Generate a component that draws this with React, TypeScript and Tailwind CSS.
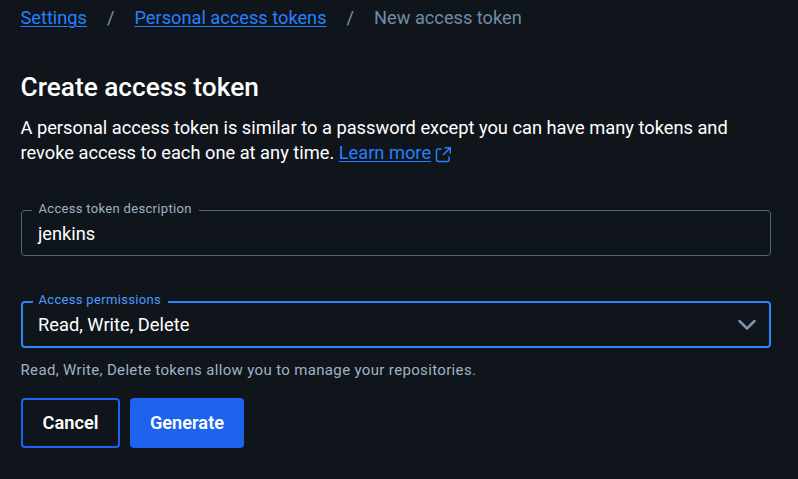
function ExternalLinkIcon() {
  return (
    <svg className="ml-[4px] inline-block h-[17px] w-[17px] align-[-4px]" viewBox="0 0 17 17" fill="none" stroke="#2680ff" strokeWidth="1.5">
      <path d="M6.5 3H3a1.5 1.5 0 0 0-1.5 1.5V14A1.5 1.5 0 0 0 3 15.5h9.5A1.5 1.5 0 0 0 14 14v-3.5" />
      <path d="M9.5 1.75h5.75V7.5M15.25 1.75 8 9" />
    </svg>
  );
}

export default function App() {
  return (
    <main className="flex h-[479px] w-[798px] flex-col bg-[#10151b] pl-[21px] pr-[27px] font-['Roboto',sans-serif] text-white">
      <nav className="-ml-[0.5px] flex h-[36px] items-center gap-[20px] text-[18.22px] leading-[36px]">
        <a className="text-[#2680ff] underline decoration-1 underline-offset-2">Settings</a>
        <span className="text-[#7794ab]">/</span>
        <a className="text-[#2680ff] underline decoration-1 underline-offset-2">Personal access tokens</a>
        <span className="text-[#7794ab]">/</span>
        <span className="text-[#6f8ca5]">New access token</span>
      </nav>
      <h1 className="-ml-[0.5px] mt-[35px] h-[32px] text-[26.25px] font-medium leading-[32px]">Create access token</h1>
      <p className="-ml-[0.5px] mt-[12px] h-[50px] text-[18.26px] leading-[25px]">
        A personal access token is similar to a password except you can have many tokens and
        <br />
        revoke access to each one at any time.{' '}
        <a className="text-[#2680ff] underline decoration-1 underline-offset-2">Learn more</a>
        <ExternalLinkIcon />
      </p>
      <fieldset className="mt-[37px] h-[54px] rounded-[4px] border border-[#4b687e] px-[10px]">
        <legend className="pb-[2px] pl-[6.5px] pr-[7px] text-[13px] leading-[14px] tracking-[0.32px] text-[#9fb2c3]">Access token description</legend>
        <div className="pl-[6px] text-[18.24px] leading-[32px]">jenkins</div>
      </fieldset>
      <fieldset className="mt-[37px] h-[55px] rounded-[4px] border-2 border-[#2a87ff] px-[10px]">
        <legend className="pb-[4px] pl-[5.5px] pr-[7.5px] text-[13px] leading-[14px] tracking-[0.32px] text-[#4b9bff]">Access permissions</legend>
        <div className="-mt-px flex items-center justify-between pl-[5px] pr-[3px] text-[18.3px] leading-[30px]">
          <span>Read, Write, Delete</span>
          <svg className="h-[12px] w-[18px]" viewBox="0 0 18 12" fill="none" stroke="#7794ab" strokeWidth="2.5" strokeLinecap="round" strokeLinejoin="round">
            <path d="m1.5 2 7.5 7.5L16.5 2" />
          </svg>
        </div>
      </fieldset>
      <p className="-ml-[0.5px] mt-[12px] h-[20px] text-[15px] leading-[20px] tracking-[0.345px] text-[#9fb2c3]">
        Read, Write, Delete tokens allow you to manage your repositories.
      </p>
      <div className="mt-[18px] flex gap-[10px] text-[18.24px] font-semibold">
        <button className="h-[50px] w-[99px] rounded-[4px] border-2 border-[#1d63ed]">Cancel</button>
        <button className="h-[50px] w-[114px] rounded-[4px] bg-[#1d63ed]">Generate</button>
      </div>
    </main>
  );
}
